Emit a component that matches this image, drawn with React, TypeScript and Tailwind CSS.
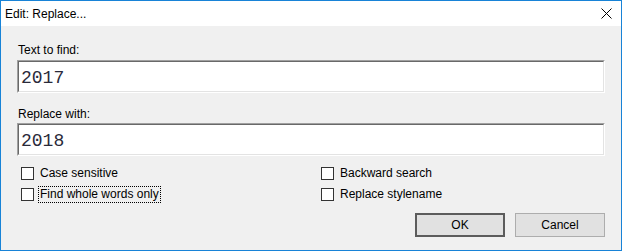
import React from "react";

const ui = { fontFamily: '"Liberation Sans", Arial, sans-serif' };

function Field({ value }: { value: string }) {
  return (
    <div className="border border-t-[#a0a0a0] border-l-[#a0a0a0] border-b-white border-r-white h-[33px]">
      <div className="h-full border border-t-[#696969] border-l-[#696969] border-b-[#e3e3e3] border-r-[#e3e3e3] bg-white flex items-center pl-[2px]">
        <span
          className="text-[18px] leading-none text-[#2a2a3a] pt-[2px]"
          style={{ fontFamily: '"Liberation Mono", "Courier New", monospace' }}
        >
          {value}
        </span>
      </div>
    </div>
  );
}

function Check({ label, focus }: { label: string; focus?: boolean }) {
  return (
    <div className="flex items-center h-[21px]">
      <div className="w-[13px] h-[13px] border border-[#333333] bg-white shrink-0" />
      <span
        className={
          "ml-[4px] px-[1px] leading-[15px] text-[12px] text-black border border-dotted " +
          (focus ? "border-black" : "border-transparent")
        }
      >
        {label}
      </span>
    </div>
  );
}

export default function App() {
  return (
    <div
      className="w-[622px] h-[251px] border border-[#1883d7] bg-[#f0f0f0] flex flex-col text-black"
      style={ui}
    >
      <div className="h-[25px] bg-white flex items-center justify-between pl-[4px] pr-[9px] shrink-0">
        <span className="text-[12px] leading-none">Edit: Replace...</span>
        <svg width="11" height="11" viewBox="0 0 11 11">
          <path d="M0.5 0.5 L10.5 10.5 M10.5 0.5 L0.5 10.5" stroke="#000" strokeWidth="1" fill="none" />
        </svg>
      </div>
      <div className="flex-1 px-[16px] flex flex-col">
        <div className="mt-[17px] ml-[1px] text-[12px] leading-[15px]">Text to find:</div>
        <div className="mt-[2px]">
          <Field value="2017" />
        </div>
        <div className="mt-[14px] ml-[1px] text-[12px] leading-[15px]">Replace with:</div>
        <div className="mt-[1px]">
          <Field value="2018" />
        </div>
        <div className="mt-[7px] grid grid-cols-[300px_1fr] pl-[4px]">
          <div className="flex flex-col">
            <Check label="Case sensitive" />
            <Check label="Find whole words only" focus />
          </div>
          <div className="flex flex-col">
            <Check label="Backward search" />
            <Check label="Replace stylename" />
          </div>
        </div>
        <div className="mt-[8px] flex justify-end gap-[10px]">
          <button className="w-[90px] h-[24px] bg-[#e1e1e1] border-2 border-[#5c5c5c] text-[12px] leading-none">
            OK
          </button>
          <button className="w-[90px] h-[24px] bg-[#e1e1e1] border border-[#adadad] text-[12px] leading-none">
            Cancel
          </button>
        </div>
      </div>
    </div>
  );
}
